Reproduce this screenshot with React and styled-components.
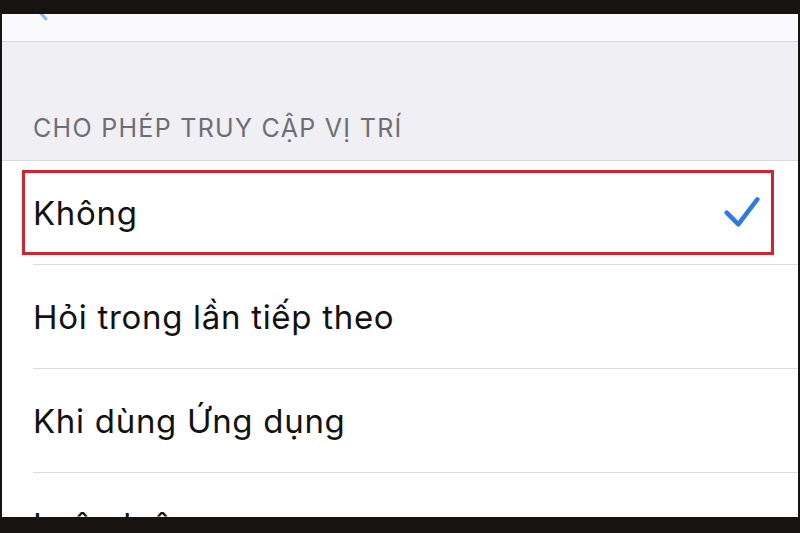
import React from 'react';
import styled, { createGlobalStyle } from 'styled-components';

const Global = createGlobalStyle`
  html, body { margin: 0; padding: 0; background: #161310; }
  body { font-family: "Inter", "Liberation Sans", sans-serif; }
`;

const options = [
  { label: 'Không', checked: true },
  { label: 'Hỏi trong lần tiếp theo' },
  { label: 'Khi dùng Ứng dụng' },
  { label: 'Luôn luôn' },
];

function Check() {
  return (
    <svg width="36" height="36" viewBox="0 0 36 36" fill="none">
      <polyline
        points="2.7,17.7 14.3,29.3 33.3,4.3"
        stroke="#2d7be0"
        strokeWidth="4.5"
        strokeLinecap="round"
        strokeLinejoin="round"
      />
    </svg>
  );
}

function Chevron() {
  return (
    <svg width="14" height="26" viewBox="0 0 14 26" fill="none">
      <polyline points="12,2 2,13 12,24" stroke="#8fb8e8" strokeWidth="3" strokeLinecap="round" strokeLinejoin="round" />
    </svg>
  );
}

export default function App() {
  return (
    <Frame>
      <Global />
      <Screen>
        <NavBar>
          <BackIcon><Chevron /></BackIcon>
        </NavBar>
        <SectionHeader>CHO PHÉP TRUY CẬP VỊ TRÍ</SectionHeader>
        <List>
          {options.map((o) => (
            <Row key={o.label} $highlight={o.checked}>
              <RowInner>
                <Label>{o.label}</Label>
                {o.checked && <Check />}
              </RowInner>
            </Row>
          ))}
        </List>
      </Screen>
    </Frame>
  );
}

const Frame = styled.div`
  width: 800px;
  height: 533px;
  box-sizing: border-box;
  padding: 14px 2px 16px 2px;
  background: #161310;
  display: flex;
  flex-direction: column;
`;

const Screen = styled.div`
  flex: 1;
  overflow: hidden;
  background: #efeff4;
  display: flex;
  flex-direction: column;
`;

const NavBar = styled.div`
  height: 27px;
  flex-shrink: 0;
  background: #fafafc;
  border-bottom: 1px solid #d6d6da;
  overflow: hidden;
  display: flex;
  align-items: flex-start;
  padding-left: 32px;
`;

const BackIcon = styled.div`
  margin-top: -19px;
  display: flex;
`;

const SectionHeader = styled.div`
  height: 118px;
  flex-shrink: 0;
  box-sizing: border-box;
  display: flex;
  align-items: flex-end;
  padding: 0 0 17px 31px;
  font-size: 25px;
  line-height: 30px;
  color: #6e6e73;
  letter-spacing: 1.3px;
`;

const List = styled.div`
  background: #ffffff;
  border-top: 1px solid #d9d9dd;
  flex: 1;
`;

const Row = styled.div`
  position: relative;
  display: flex;
  padding-left: 31px;

  ${(p) =>
    p.$highlight &&
    `
    &::after {
      content: "";
      position: absolute;
      left: 20px;
      right: 24px;
      top: 9px;
      height: 79px;
      border: 3px solid #cf2530;
      pointer-events: none;
    }
  `}
`;

const RowInner = styled.div`
  flex: 1;
  height: 103px;
  display: flex;
  align-items: center;
  justify-content: space-between;
  padding-right: 38px;
  border-bottom: 1px solid #dcdcdf;
`;

const Label = styled.span`
  font-size: 33px;
  color: #121212;
  letter-spacing: 0.7px;
`;
